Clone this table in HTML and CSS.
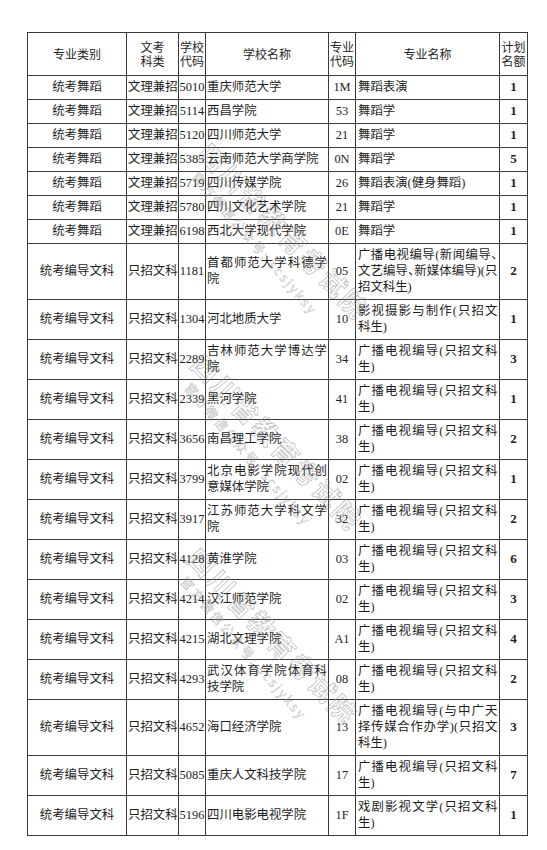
FILE: index.html
```html
<!DOCTYPE html>
<html lang="zh-CN">
<head>
<meta charset="utf-8">
<title>招生计划</title>
<link rel="stylesheet" href="styles.css">
</head>
<body>
<div class="page">
  <table class="plan">
    <colgroup>
      <col class="c1"><col class="c2"><col class="c3"><col class="c4"><col class="c5"><col class="c6"><col class="c7">
    </colgroup>
    <thead>
      <tr>
        <th>专业类别</th>
        <th>文考<br>科类</th>
        <th>学校<br>代码</th>
        <th>学校名称</th>
        <th>专业<br>代码</th>
        <th>专业名称</th>
        <th>计划<br>名额</th>
      </tr>
    </thead>
    <tbody>
      <tr><td class="cat">统考舞蹈</td><td class="kind">文理兼招</td><td class="code">5010</td><td class="school">重庆师范大学</td><td class="mcode">1M</td><td class="major">舞蹈表演</td><td class="num">1</td></tr>
      <tr><td class="cat">统考舞蹈</td><td class="kind">文理兼招</td><td class="code">5114</td><td class="school">西昌学院</td><td class="mcode">53</td><td class="major">舞蹈学</td><td class="num">1</td></tr>
      <tr><td class="cat">统考舞蹈</td><td class="kind">文理兼招</td><td class="code">5120</td><td class="school">四川师范大学</td><td class="mcode">21</td><td class="major">舞蹈学</td><td class="num">1</td></tr>
      <tr><td class="cat">统考舞蹈</td><td class="kind">文理兼招</td><td class="code">5385</td><td class="school">云南师范大学商学院</td><td class="mcode">0N</td><td class="major">舞蹈学</td><td class="num">5</td></tr>
      <tr><td class="cat">统考舞蹈</td><td class="kind">文理兼招</td><td class="code">5719</td><td class="school">四川传媒学院</td><td class="mcode">26</td><td class="major">舞蹈表演(健身舞蹈)</td><td class="num">1</td></tr>
      <tr><td class="cat">统考舞蹈</td><td class="kind">文理兼招</td><td class="code">5780</td><td class="school">四川文化艺术学院</td><td class="mcode">21</td><td class="major">舞蹈学</td><td class="num">1</td></tr>
      <tr><td class="cat">统考舞蹈</td><td class="kind">文理兼招</td><td class="code">6198</td><td class="school">西北大学现代学院</td><td class="mcode">0E</td><td class="major">舞蹈学</td><td class="num">1</td></tr>
      <tr><td class="cat">统考编导文科</td><td class="kind">只招文科</td><td class="code">1181</td><td class="school">首都师范大学科德学院</td><td class="mcode">05</td><td class="major">广播电视编导(新闻编导<span class="half">、</span>文艺编导<span class="half">、</span>新媒体编导)(只招文科生)</td><td class="num">2</td></tr>
      <tr><td class="cat">统考编导文科</td><td class="kind">只招文科</td><td class="code">1304</td><td class="school">河北地质大学</td><td class="mcode">10</td><td class="major">影视摄影与制作(只招文科生)</td><td class="num">1</td></tr>
      <tr><td class="cat">统考编导文科</td><td class="kind">只招文科</td><td class="code">2289</td><td class="school">吉林师范大学博达学院</td><td class="mcode">34</td><td class="major">广播电视编导(只招文科生)</td><td class="num">3</td></tr>
      <tr><td class="cat">统考编导文科</td><td class="kind">只招文科</td><td class="code">2339</td><td class="school">黑河学院</td><td class="mcode">41</td><td class="major">广播电视编导(只招文科生)</td><td class="num">1</td></tr>
      <tr><td class="cat">统考编导文科</td><td class="kind">只招文科</td><td class="code">3656</td><td class="school">南昌理工学院</td><td class="mcode">38</td><td class="major">广播电视编导(只招文科生)</td><td class="num">2</td></tr>
      <tr><td class="cat">统考编导文科</td><td class="kind">只招文科</td><td class="code">3799</td><td class="school">北京电影学院现代创意媒体学院</td><td class="mcode">02</td><td class="major">广播电视编导(只招文科生)</td><td class="num">1</td></tr>
      <tr><td class="cat">统考编导文科</td><td class="kind">只招文科</td><td class="code">3917</td><td class="school">江苏师范大学科文学院</td><td class="mcode">32</td><td class="major">广播电视编导(只招文科生)</td><td class="num">2</td></tr>
      <tr><td class="cat">统考编导文科</td><td class="kind">只招文科</td><td class="code">4128</td><td class="school">黄淮学院</td><td class="mcode">03</td><td class="major">广播电视编导(只招文科生)</td><td class="num">6</td></tr>
      <tr><td class="cat">统考编导文科</td><td class="kind">只招文科</td><td class="code">4214</td><td class="school">汉江师范学院</td><td class="mcode">02</td><td class="major">广播电视编导(只招文科生)</td><td class="num">3</td></tr>
      <tr><td class="cat">统考编导文科</td><td class="kind">只招文科</td><td class="code">4215</td><td class="school">湖北文理学院</td><td class="mcode">A1</td><td class="major">广播电视编导(只招文科生)</td><td class="num">4</td></tr>
      <tr><td class="cat">统考编导文科</td><td class="kind">只招文科</td><td class="code">4293</td><td class="school">武汉体育学院体育科技学院</td><td class="mcode">08</td><td class="major">广播电视编导(只招文科生)</td><td class="num">2</td></tr>
      <tr><td class="cat">统考编导文科</td><td class="kind">只招文科</td><td class="code">4652</td><td class="school">海口经济学院</td><td class="mcode">13</td><td class="major">广播电视编导(与中广天择传媒合作办学)(只招文科生)</td><td class="num">3</td></tr>
      <tr><td class="cat">统考编导文科</td><td class="kind">只招文科</td><td class="code">5085</td><td class="school">重庆人文科技学院</td><td class="mcode">17</td><td class="major">广播电视编导(只招文科生)</td><td class="num">7</td></tr>
      <tr><td class="cat">统考编导文科</td><td class="kind">只招文科</td><td class="code">5196</td><td class="school">四川电影电视学院</td><td class="mcode">1F</td><td class="major">戏剧影视文学(只招文科生)</td><td class="num">1</td></tr>
    </tbody>
  </table>

  <div class="wm wm1" aria-hidden="true">
    <div class="wm-big">四川省教育考试院</div>
    <div class="wm-small">官方微信公众号: scsjyksy</div>
  </div>
  <div class="wm wm2" aria-hidden="true">
    <div class="wm-big">四川省教育考试院</div>
    <div class="wm-small">官方微信公众号: scsjyksy</div>
  </div>
  <div class="wm wm3" aria-hidden="true">
    <div class="wm-big">四川省教育考试院</div>
    <div class="wm-small">官方微信公众号: scsjyksy</div>
  </div>
</div>
</body>
</html>
```
FILE: styles.css
```css
html, body {
  margin: 0;
  padding: 0;
  background: #ffffff;
}

body {
  font-family: "Liberation Serif", "Noto Sans CJK SC", serif;
  color: #1e1e1e;
  text-autospace: no-autospace;
}

.page {
  position: relative;
  width: 547px;
  height: 850px;
  box-sizing: border-box;
  padding: 32px 0 0 27px;
  overflow: hidden;
}

.plan {
  border-collapse: collapse;
  table-layout: fixed;
  width: 500px;
}

.c1 { width: 99px; }
.c2 { width: 52px; }
.c3 { width: 27px; }
.c4 { width: 123px; }
.c5 { width: 27px; }
.c6 { width: 144px; }
.c7 { width: 28px; }

.plan th,
.plan td {
  border: 1px solid #3a3a3a;
  vertical-align: middle;
  overflow: visible;
}

.plan th {
  font-family: "Noto Sans CJK SC", sans-serif;
  font-weight: normal;
  font-size: 12px;
  line-height: 14px;
  color: #262626;
  padding: 6.75px 0;
  text-align: center;
}

.plan td {
  font-size: 12.4px;
  line-height: 16px;
  padding: 3.5px 0;
}

.cat {
  text-align: center;
}

.kind {
  text-align: left;
  padding-left: 1px !important;
  white-space: nowrap;
}

.code {
  text-align: center;
  white-space: nowrap;
}

.school {
  text-align: justify;
  padding-left: 1px !important;
  padding-right: 1px !important;
}

.mcode {
  text-align: center;
  white-space: nowrap;
}

.major {
  text-align: justify;
  padding-left: 2px !important;
  padding-right: 1.5px !important;
}

.half {
  font-feature-settings: "halt" 1;
}

.num {
  text-align: center;
  font-weight: bold;
  font-size: 13px !important;
}

/* watermark overlay */
.wm {
  position: absolute;
  transform-origin: 0 0;
  transform: rotate(46deg);
  pointer-events: none;
  white-space: nowrap;
  font-family: "Noto Sans CJK SC", sans-serif;
}

.wm1 { left: 214px; top: 138px; }
.wm2 { left: 207px; top: 349px; }
.wm3 { left: 203px; top: 543px; }

.wm-big {
  font-size: 26px;
  line-height: 28px;
  font-weight: bold;
  letter-spacing: 3px;
  color: rgba(255, 255, 255, 0);
  -webkit-text-stroke: 0.8px rgba(130, 130, 130, 0.5);
}

.wm-small {
  margin-top: 3px;
  margin-left: 12px;
  font-size: 13px;
  line-height: 16px;
  letter-spacing: 2.2px;
  transform-origin: 0 50%;
  transform: rotate(3deg);
  color: rgba(180, 180, 180, 0.25);
  -webkit-text-stroke: 0.45px rgba(140, 140, 140, 0.5);
}
```
